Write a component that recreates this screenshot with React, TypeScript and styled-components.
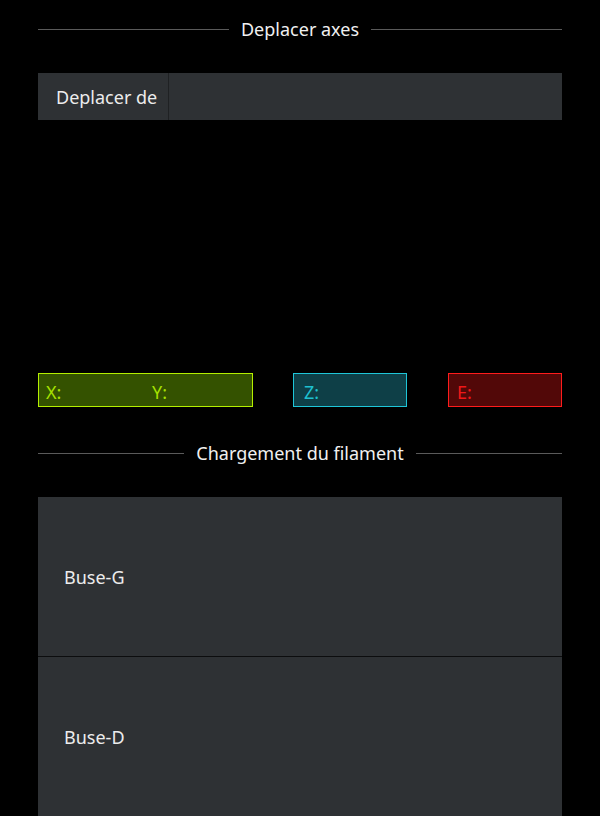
import React from "react";
import styled, { createGlobalStyle } from "styled-components";

const Global = createGlobalStyle`
  html, body { margin: 0; padding: 0; background: #000; }
  body { font-family: "Noto Sans", "Open Sans", sans-serif; color: #ececec; }
`;

const Page = styled.div`
  width: 600px;
  height: 816px;
  overflow: hidden;
  box-sizing: border-box;
  padding: 17px 38px 0;
  display: flex;
  flex-direction: column;
`;

const SectionTitle = styled.div<{ $mt?: number }>`
  display: flex;
  align-items: center;
  gap: 12px;
  height: 24px;
  margin-top: ${(p) => p.$mt ?? 0}px;
  font-size: 18px;
  color: #f0f0f0;
  white-space: nowrap;
  &::before, &::after {
    content: "";
    flex: 1;
    height: 1px;
    background: #5a5a5a;
  }
`;

const MoveBar = styled.div`
  margin-top: 32px;
  height: 47px;
  background: #2e3134;
  display: flex;
  align-items: stretch;
`;

const MoveLabel = styled.div`
  padding: 0 11px 0 18px;
  display: flex;
  align-items: center;
  font-size: 18px;
  border-right: 1px solid #1f2123;
`;

const AxisRow = styled.div`
  margin-top: 253px;
  height: 34px;
  display: flex;
  gap: 40px;
`;

const AxisBox = styled.div<{ $w: number; $pad: number; $border: string; $bg: string; $fg: string }>`
  box-sizing: border-box;
  width: ${(p) => p.$w}px;
  height: 34px;
  border: 1px solid ${(p) => p.$border};
  background: ${(p) => p.$bg};
  color: ${(p) => p.$fg};
  display: flex;
  align-items: center;
  padding: 4px 0 0 ${(p) => p.$pad}px;
  font-size: 18px;
  &:last-child {
    margin-left: auto;
  }
`;

const AxisLabel = styled.span<{ $w?: number }>`
  width: ${(p) => (p.$w ? `${p.$w}px` : "auto")};
`;

const Panels = styled.div`
  margin-top: 32px;
  display: flex;
  flex-direction: column;
`;

const Nozzle = styled.div`
  height: 159px;
  background: #2e3134;
  display: flex;
  align-items: center;
  padding-left: 26px;
  font-size: 18px;
  & + & {
    border-top: 1px solid #0c0d0e;
  }
`;

export default function App() {
  return (
    <>
      <Global />
      <Page>
        <SectionTitle>Deplacer axes</SectionTitle>
        <MoveBar>
          <MoveLabel>Deplacer de</MoveLabel>
        </MoveBar>
        <AxisRow>
          <AxisBox $w={215} $pad={7} $border="#b4ef00" $bg="#345200" $fg="#a6e000">
            <AxisLabel $w={106}>X:</AxisLabel>
            <AxisLabel>Y:</AxisLabel>
          </AxisBox>
          <AxisBox $w={114} $pad={10} $border="#1ec6d8" $bg="#0e3f47" $fg="#1ec0d0">
            <AxisLabel>Z:</AxisLabel>
          </AxisBox>
          <AxisBox $w={114} $pad={8} $border="#ff1c1c" $bg="#520808" $fg="#f01818">
            <AxisLabel>E:</AxisLabel>
          </AxisBox>
        </AxisRow>
        <SectionTitle $mt={34}>Chargement du filament</SectionTitle>
        <Panels>
          <Nozzle>Buse-G</Nozzle>
          <Nozzle>Buse-D</Nozzle>
        </Panels>
      </Page>
    </>
  );
}
